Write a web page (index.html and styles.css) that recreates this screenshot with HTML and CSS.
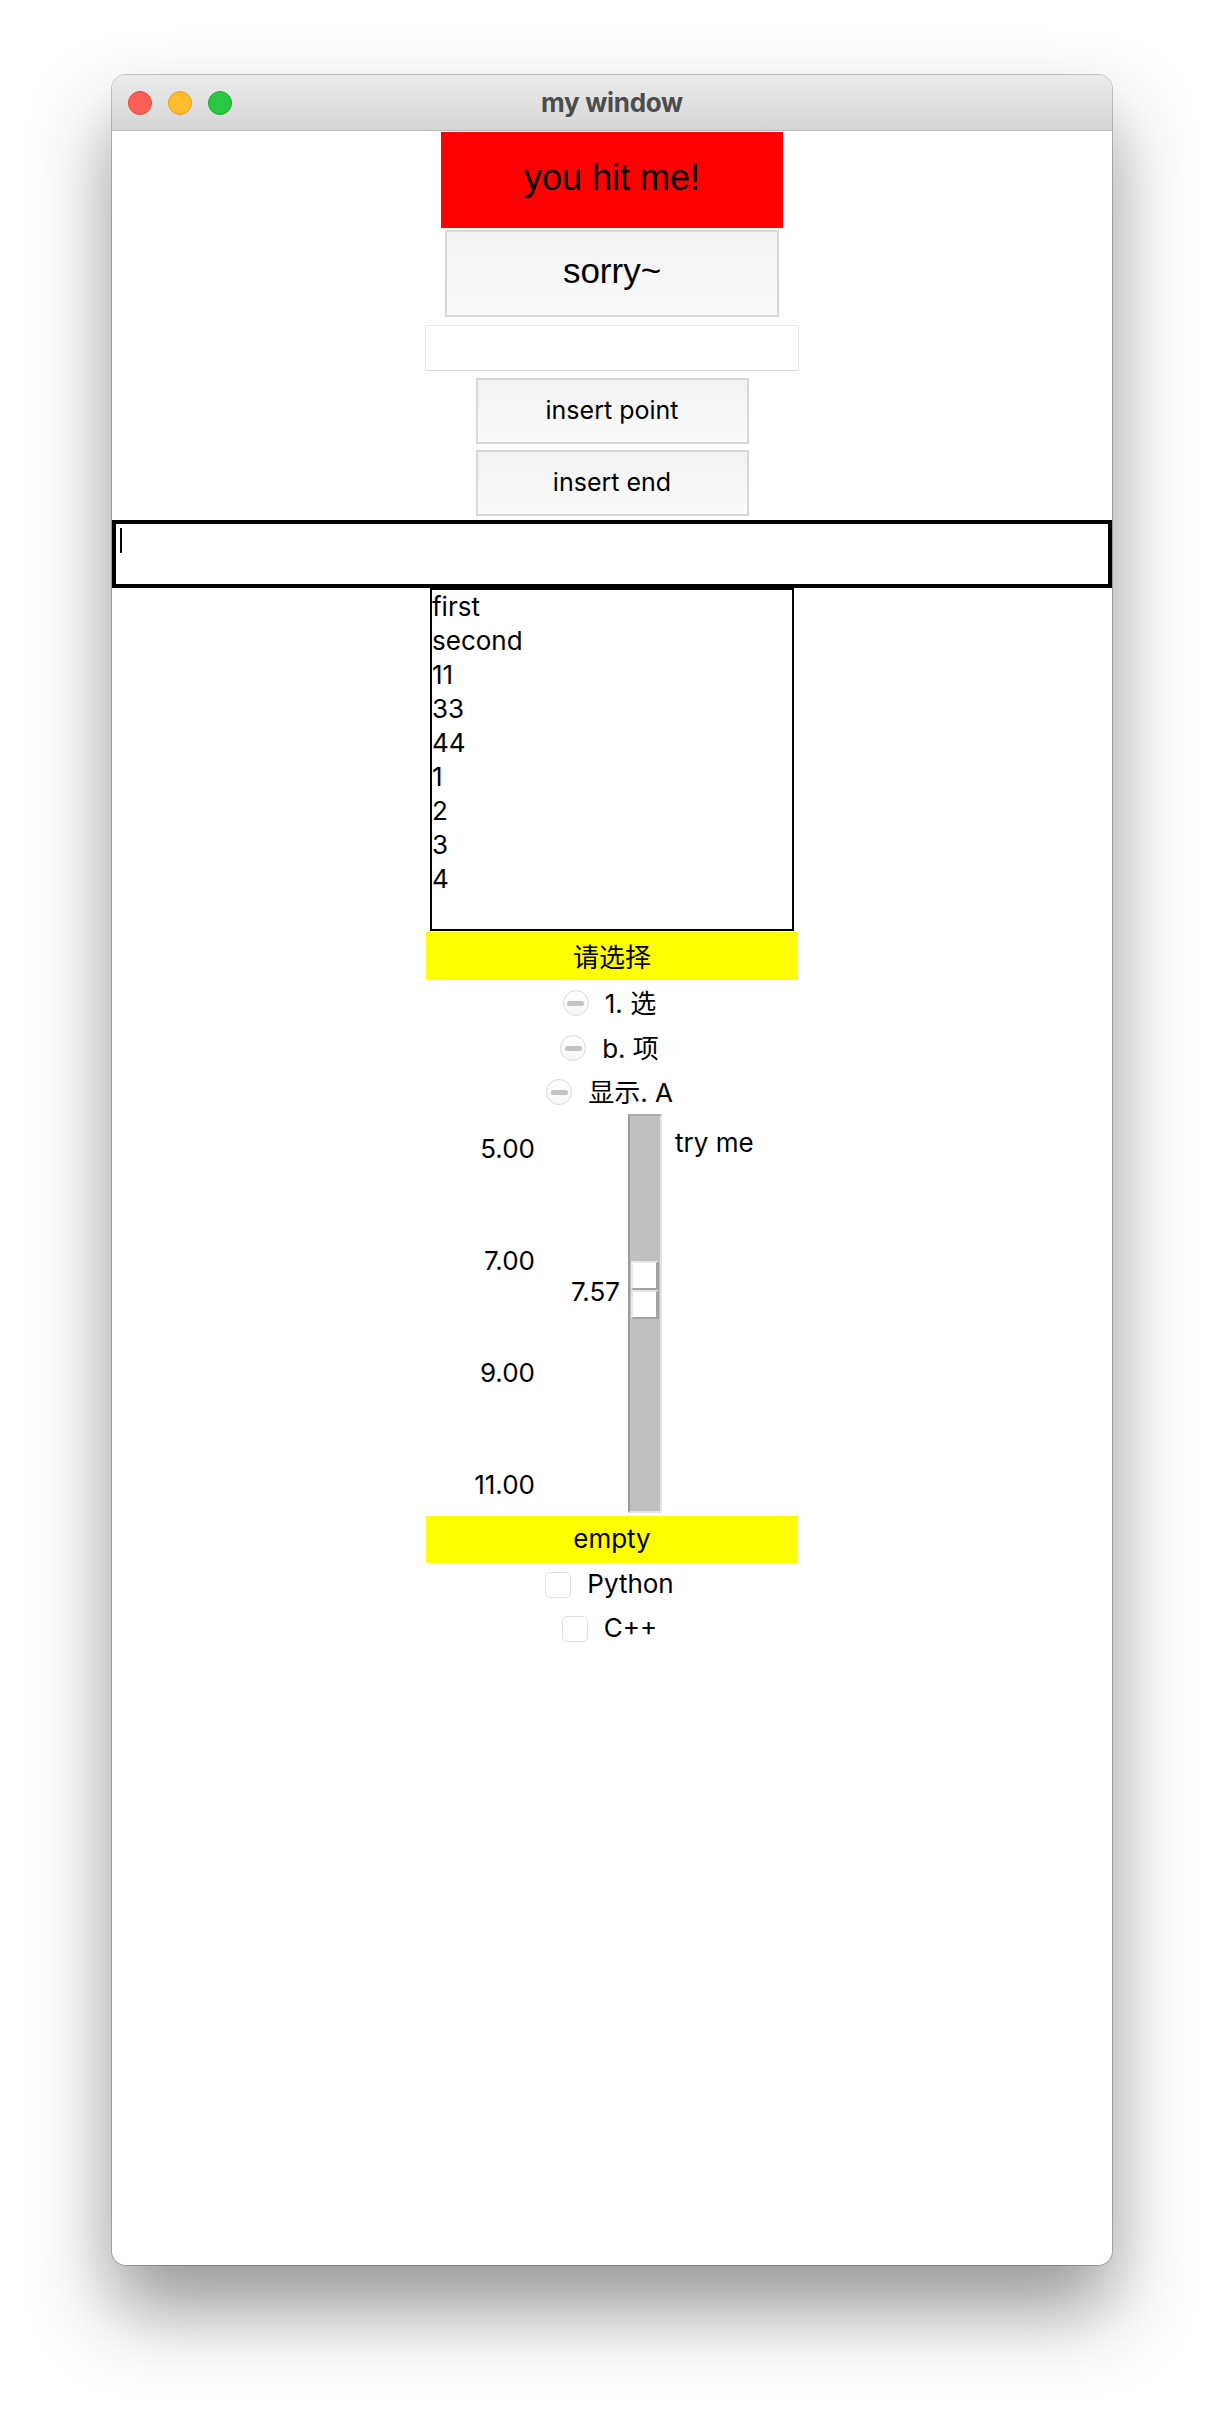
FILE: index.html
```html
<!DOCTYPE html>
<html lang="zh">
<head>
<meta charset="utf-8">
<title>my window</title>
<link rel="stylesheet" href="styles.css">
</head>
<body>
<div class="window">
  <div class="titlebar">
    <div class="lights">
      <span class="light red"></span>
      <span class="light yellow-light"></span>
      <span class="light green"></span>
    </div>
    <div class="title">my window</div>
    <div class="spacer"></div>
  </div>
  <div class="content">
    <div class="hit-label">you hit me!</div>
    <div class="btn btn-big">sorry~</div>
    <div class="entry"></div>
    <div class="btn btn-small">insert point</div>
    <div class="btn btn-small btn-last">insert end</div>
    <div class="textbox"><span class="caret"></span></div>
    <div class="listbox">
      <div class="list-item">first</div>
      <div class="list-item">second</div>
      <div class="list-item">11</div>
      <div class="list-item">33</div>
      <div class="list-item">44</div>
      <div class="list-item">1</div>
      <div class="list-item">2</div>
      <div class="list-item">3</div>
      <div class="list-item">4</div>
    </div>
    <div class="yellow-label">请选择</div>
    <div class="option-row radio-row"><span class="radio"><span class="dash"></span></span><span class="option-text">1. 选</span></div>
    <div class="option-row radio-row"><span class="radio"><span class="dash"></span></span><span class="option-text">b. 项</span></div>
    <div class="option-row radio-row last-radio"><span class="radio"><span class="dash"></span></span><span class="option-text">显示. A</span></div>
    <div class="scale">
      <div class="ticks">
        <div class="tick">5.00</div>
        <div class="tick">7.00</div>
        <div class="tick">9.00</div>
        <div class="tick">11.00</div>
      </div>
      <div class="scale-value">7.57</div>
      <div class="trough">
        <div class="thumb">
          <div class="thumb-half"></div>
          <div class="thumb-half"></div>
        </div>
      </div>
      <div class="scale-label">try me</div>
    </div>
    <div class="yellow-label empty">empty</div>
    <div class="option-row check-row"><span class="checkbox"></span><span class="option-text">Python</span></div>
    <div class="option-row check-row"><span class="checkbox"></span><span class="option-text">C++</span></div>
  </div>
</div>
</body>
</html>
```
FILE: styles.css
```css
html, body {
  margin: 0;
  padding: 0;
  background: #ffffff;
}

body {
  padding-top: 75px;
  height: 2414px;
  box-sizing: border-box;
  overflow: hidden;
  font-family: Inter, "Noto Sans CJK SC", sans-serif;
  color: #000;
}

.window {
  width: 1000px;
  height: 2190px;
  margin: 0 auto;
  background: #ffffff;
  border-radius: 14px;
  overflow: hidden;
  box-shadow: 0 0 0 1px rgba(0, 0, 0, 0.22), 0 44px 80px rgba(0, 0, 0, 0.42);
  display: flex;
  flex-direction: column;
}

.titlebar {
  height: 56px;
  box-sizing: border-box;
  border-bottom: 1px solid #b9b9b9;
  background: linear-gradient(#ebebeb, #d6d6d6);
  display: grid;
  grid-template-columns: 1fr auto 1fr;
  align-items: center;
  flex: none;
}

.lights {
  display: flex;
  gap: 16px;
  padding-left: 16px;
  margin-top: 1px;
}

.light {
  width: 22px;
  height: 22px;
  border-radius: 50%;
  border: 1px solid transparent;
}

.red { background: #ff5f57; border-color: #e2463f; }
.yellow-light { background: #febc2e; border-color: #e1a116; }
.green { background: #28c840; border-color: #17ad2a; }

.title {
  font-family: Inter, sans-serif;
  font-weight: 700;
  font-size: 26px;
  color: #4d4d4d;
  letter-spacing: -0.3px;
  margin-top: -1px;
}

.content {
  display: flex;
  flex-direction: column;
  align-items: center;
  font-size: 26px;
}

.hit-label {
  margin-top: 1px;
  width: 342px;
  height: 96px;
  background: #ff0000;
  display: flex;
  align-items: center;
  justify-content: center;
  font-family: "Liberation Sans", Arial, sans-serif;
  font-size: 36px;
  padding-bottom: 4px;
  box-sizing: border-box;
}

.btn {
  box-sizing: border-box;
  border: 2px solid #d8d8d8;
  background: linear-gradient(#f2f2f2, #fbfbfb);
  display: flex;
  align-items: center;
  justify-content: center;
}

.btn-big {
  margin-top: 2px;
  width: 334px;
  height: 87px;
  font-family: "Liberation Sans", Arial, sans-serif;
  font-size: 35px;
  padding-bottom: 6px;
}

.entry {
  margin-top: 8px;
  width: 374px;
  height: 46px;
  box-sizing: border-box;
  border: 1px solid #e6e6e6;
  border-bottom-color: #dadada;
  background: #fff;
}

.btn-small {
  margin-top: 7px;
  width: 273px;
  height: 66px;
  font-size: 25px;
  padding-bottom: 3px;
}

.btn-last {
  margin-top: 6px;
}

.textbox {
  margin-top: 4px;
  width: 1000px;
  height: 68px;
  box-sizing: border-box;
  border: 4px solid #000;
  padding: 4px;
  background: #fff;
}

.caret {
  display: block;
  width: 2px;
  height: 25px;
  background: #000;
}

.listbox {
  width: 364px;
  height: 343px;
  box-sizing: border-box;
  border: 2px solid #000;
  background: #fff;
  line-height: 34px;
  font-size: 26px;
}

.list-item {
  height: 34px;
}

.yellow-label {
  margin-top: 1px;
  width: 372px;
  height: 48px;
  background: #ffff00;
  display: flex;
  align-items: center;
  justify-content: center;
  font-size: 26px;
  padding-bottom: 2px;
  box-sizing: border-box;
}

.yellow-label.empty {
  margin-top: 3px;
  height: 47px;
}

.option-row {
  height: 44px;
  display: flex;
  align-items: center;
  gap: 16px;
  padding-right: 5px;
  font-size: 26px;
}

.radio-row {
  margin-top: 1px;
}

.last-radio {
  margin-top: 0;
}

.radio-row .option-text {
  margin-top: -4px;
}

.check-row .option-text {
  margin-top: -3px;
}

.radio {
  width: 26px;
  height: 26px;
  box-sizing: border-box;
  border-radius: 50%;
  border: 1px solid #d9d9d9;
  background: linear-gradient(#ffffff, #f6f6f6);
  display: flex;
  align-items: center;
  justify-content: center;
}

.dash {
  width: 17px;
  height: 5px;
  border-radius: 3px;
  background: #c3c3c3;
}

.checkbox {
  width: 26px;
  height: 26px;
  box-sizing: border-box;
  border-radius: 5px;
  border: 1px solid #e0e0e0;
  background: #fff;
}

.scale {
  height: 399px;
  display: flex;
  font-size: 26px;
  line-height: 34px;
}

.ticks {
  width: 90px;
  display: flex;
  flex-direction: column;
  align-items: flex-end;
  padding-top: 18px;
  gap: 78px;
}

.tick {
  height: 34px;
}

.scale-value {
  width: 85px;
  text-align: right;
  padding-top: 161px;
}

.trough {
  position: relative;
  margin-left: 8px;
  width: 34px;
  height: 399px;
  box-sizing: border-box;
  background: #c0c0c0;
  border-left: 2px solid #9c9c9c;
  border-top: 2px solid #a8a8a8;
  border-right: 2px solid #e4e4e4;
  border-bottom: 2px solid #e4e4e4;
}

.thumb {
  position: absolute;
  left: 1px;
  top: 145px;
  width: 28px;
  display: flex;
  flex-direction: column;
}

.thumb-half {
  height: 29px;
  box-sizing: border-box;
  background: #ffffff;
  border-top: 2px solid #e8e8e8;
  border-left: 2px solid #e8e8e8;
  border-right: 3px solid #a3a3a3;
  border-bottom: 2px solid #a3a3a3;
}

.scale-label {
  margin-left: 13px;
  width: 104px;
  padding-top: 12px;
}
```
